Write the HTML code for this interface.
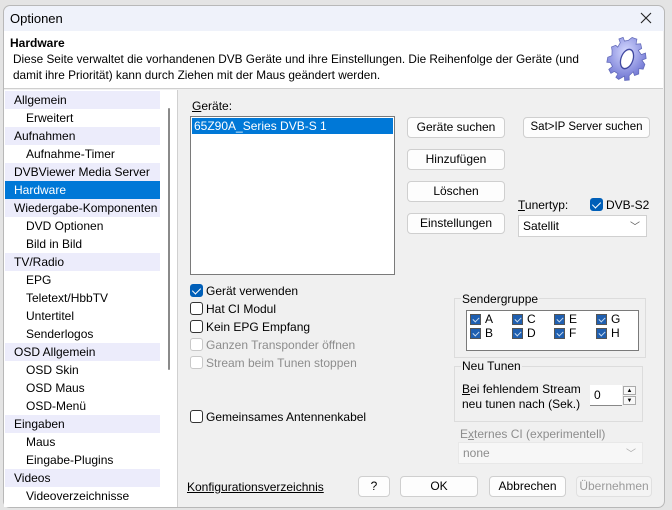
<!DOCTYPE html>
<html><head><meta charset="utf-8"><style>
*{box-sizing:border-box;margin:0;padding:0}
body{width:672px;height:510px;background:#e4e4e4;font-family:"Liberation Sans",sans-serif;font-size:12px;color:#000;position:relative;overflow:hidden}
.a{position:absolute}
.win{left:3px;top:5px;width:662px;height:503px;background:#f0f0f0;border:1px solid #b8b8b8;border-radius:7px;overflow:hidden}
.btn{position:absolute;height:21px;background:#fdfdfd;border:1px solid #cfcfcf;border-radius:4px;text-align:center;line-height:19px;font-size:12px;white-space:nowrap}
.tr{position:absolute;left:5px;width:155px;height:18px;line-height:18px;padding-left:9px;white-space:nowrap}
.cat{background:#ececfb}
.sub{padding-left:21px}
.cb{position:absolute;width:13px;height:13px;border:1px solid #333;border-radius:3px;background:#fff}
.cbc{background:#005fb8;border-color:#005fb8}
.cbc::after{content:"";position:absolute;left:3px;top:1px;width:4px;height:7px;border:solid #fff;border-width:0 1.5px 1.5px 0;transform:rotate(45deg)}
.dis{color:#8d8d8d}
.sq{position:absolute;width:11px;height:11px;background:#1f5fb0;border:1px solid #555}
.sq::after{content:"";position:absolute;left:3px;top:1px;width:3px;height:5px;border:solid #cde;border-width:0 1px 1px 0;transform:rotate(45deg)}
</style></head><body>
<div class="a win"></div>
<div class="a" style="left:4px;top:6px;width:660px;height:25px;background:#eff2fa;border-radius:7px 7px 0 0"></div>
<div class="a" style="left:10px;top:11px;font-size:13px">Optionen</div>
<svg class="a" style="left:640px;top:12px" width="12" height="12" viewBox="0 0 12 12"><path d="M1,1 L11,11 M11,1 L1,11" stroke="#222" stroke-width="1.1"/></svg>
<div class="a" style="left:4px;top:31px;width:659px;height:58px;background:#fff;border-bottom:1px solid #cfcfcf"></div>
<div class="a" style="left:10px;top:36px;font-weight:bold">Hardware</div>
<div class="a" style="left:13px;top:51px;line-height:16px;width:585px;font-size:11.8px">Diese Seite verwaltet die vorhandenen DVB Geräte und ihre Einstellungen. Die Reihenfolge der Geräte (und damit ihre Priorität) kann durch Ziehen mit der Maus geändert werden.</div>
<svg class="a" style="left:604px;top:36px" width="46" height="46" viewBox="0 0 46 46">
<defs><radialGradient id="g" cx="40%" cy="35%" r="70%"><stop offset="0" stop-color="#d4d8ff"/><stop offset="1" stop-color="#6a70d0"/></radialGradient></defs>
<g transform="translate(23,23) rotate(20) scale(0.85,1)">
<path fill="url(#g)" stroke="#6068b8" stroke-width="0.8" d="M-3,-22 L3,-22 L4,-17 L9,-19 L12,-15 L9,-12 L14,-9 L18,-12 L21,-7 L17,-4 L22,-1 L22,4 L17,5 L19,10 L15,13 L12,10 L9,15 L11,19 L6,21 L4,17 L-1,22 L-5,21 L-4,17 L-9,16 L-12,19 L-16,16 L-13,12 L-17,9 L-21,10 L-22,5 L-18,2 L-20,-3 L-22,-6 L-18,-9 L-15,-8 L-14,-13 L-17,-16 L-13,-19 L-10,-16 L-6,-18 Z"/>
<ellipse cx="0" cy="0" rx="7" ry="10" fill="#fff" stroke="#4048a0" stroke-width="1.5"/>
</g></svg>
<div class="a" style="left:4px;top:90px;width:174px;height:417px;background:#fff;border-right:1px solid #d0d0d0"></div>
<div class="a" style="left:168px;top:108px;width:2px;height:262px;background:#8a8a8a;border-radius:1px"></div>
<div class="tr cat" style="top:91px">Allgemein</div>
<div class="tr sub" style="top:109px">Erweitert</div>
<div class="tr cat" style="top:127px">Aufnahmen</div>
<div class="tr sub" style="top:145px">Aufnahme-Timer</div>
<div class="tr cat" style="top:163px">DVBViewer Media Server</div>
<div class="tr" style="top:181px;background:#0078d7;color:#fff">Hardware</div>
<div class="tr cat" style="top:199px">Wiedergabe-Komponenten</div>
<div class="tr sub" style="top:217px">DVD Optionen</div>
<div class="tr sub" style="top:235px">Bild in Bild</div>
<div class="tr cat" style="top:253px">TV/Radio</div>
<div class="tr sub" style="top:271px">EPG</div>
<div class="tr sub" style="top:289px">Teletext/HbbTV</div>
<div class="tr sub" style="top:307px">Untertitel</div>
<div class="tr sub" style="top:325px">Senderlogos</div>
<div class="tr cat" style="top:343px">OSD Allgemein</div>
<div class="tr sub" style="top:361px">OSD Skin</div>
<div class="tr sub" style="top:379px">OSD Maus</div>
<div class="tr sub" style="top:397px">OSD-Menü</div>
<div class="tr cat" style="top:415px">Eingaben</div>
<div class="tr sub" style="top:433px">Maus</div>
<div class="tr sub" style="top:451px">Eingabe-Plugins</div>
<div class="tr cat" style="top:469px">Videos</div>
<div class="tr sub" style="top:487px">Videoverzeichnisse</div>

<div class="a" style="left:192px;top:99px"><u>G</u>eräte:</div>
<div class="a" style="left:190px;top:116px;width:205px;height:159px;background:#fff;border:1px solid #7a7a7a"></div>
<div class="a" style="left:192px;top:118px;width:201px;height:16px;background:#0078d7;color:#fff;padding-left:2px;line-height:16px">65Z90A_Series DVB-S 1</div>
<div class="btn" style="left:407px;top:117px;width:98px">Geräte suchen</div>
<div class="btn" style="left:523px;top:117px;width:127px;font-size:11.5px">Sat&gt;IP Server suchen</div>
<div class="btn" style="left:407px;top:149px;width:98px">Hinzufügen</div>
<div class="btn" style="left:407px;top:181px;width:98px">Löschen</div>
<div class="btn" style="left:407px;top:213px;width:98px">Einstellungen</div>
<div class="a" style="left:518px;top:198px"><u>T</u>unertyp:</div>
<div class="cb cbc" style="left:590px;top:198px"></div>
<div class="a" style="left:606px;top:198px">DVB-S2</div>
<div class="a" style="left:518px;top:215px;width:129px;height:22px;background:#fff;border:1px solid #d0d0d0;padding:3px 4px">Satellit<span style="position:absolute;right:6px;top:2px;font-size:10px;color:#555">﹀</span></div>

<div class="cb cbc" style="left:190px;top:284px"></div><div class="a" style="left:206px;top:284px">Gerät verwenden</div>
<div class="cb" style="left:190px;top:302px"></div><div class="a" style="left:206px;top:302px">Hat CI Modul</div>
<div class="cb" style="left:190px;top:320px"></div><div class="a" style="left:206px;top:320px">Kein EPG Empfang</div>
<div class="cb" style="left:190px;top:338px;border-color:#c8c8c8"></div><div class="a dis" style="left:206px;top:338px">Ganzen Transponder öffnen</div>
<div class="cb" style="left:190px;top:356px;border-color:#c8c8c8"></div><div class="a dis" style="left:206px;top:356px">Stream beim Tunen stoppen</div>
<div class="cb" style="left:190px;top:410px"></div><div class="a" style="left:206px;top:410px">Gemeinsames Antennenkabel</div>

<div class="a" style="left:454px;top:298px;width:192px;height:60px;border:1px solid #dcdcdc"></div>
<div class="a" style="left:461px;top:292px;background:#f0f0f0;padding:0 1px">Sendergruppe</div>
<div class="a" style="left:466px;top:310px;width:173px;height:41px;background:#fff;border:1px solid #7a7a7a"></div>
<div class="sq" style="left:470px;top:314px"></div><div class="a" style="left:485px;top:312px">A</div>
<div class="sq" style="left:512px;top:314px"></div><div class="a" style="left:527px;top:312px">C</div>
<div class="sq" style="left:554px;top:314px"></div><div class="a" style="left:569px;top:312px">E</div>
<div class="sq" style="left:596px;top:314px"></div><div class="a" style="left:611px;top:312px">G</div>
<div class="sq" style="left:470px;top:328px"></div><div class="a" style="left:485px;top:326px">B</div>
<div class="sq" style="left:512px;top:328px"></div><div class="a" style="left:527px;top:326px">D</div>
<div class="sq" style="left:554px;top:328px"></div><div class="a" style="left:569px;top:326px">F</div>
<div class="sq" style="left:596px;top:328px"></div><div class="a" style="left:611px;top:326px">H</div>

<div class="a" style="left:454px;top:366px;width:189px;height:56px;border:1px solid #dcdcdc"></div>
<div class="a" style="left:461px;top:359px;background:#f0f0f0;padding:0 1px">Neu Tunen</div>
<div class="a" style="left:462px;top:382px;line-height:15px"><u>B</u>ei fehlendem Stream<br>neu tunen nach (Sek.)</div>
<div class="a" style="left:590px;top:385px;width:32px;height:21px;background:#fff;border-bottom:1px solid #888;padding:3px 4px">0</div>
<div class="a" style="left:623px;top:386px;width:13px;height:9px;border:1px solid #aaa;background:#f8f8f8;font-size:6px;text-align:center;line-height:8px">▲</div>
<div class="a" style="left:623px;top:396px;width:13px;height:9px;border:1px solid #aaa;background:#f8f8f8;font-size:6px;text-align:center;line-height:8px">▼</div>

<div class="a dis" style="left:460px;top:427px">E<u>x</u>ternes CI (experimentell)</div>
<div class="a" style="left:458px;top:442px;width:185px;height:22px;background:#f7f7f7;border:1px solid #e8e8e8;padding:3px 4px;color:#8d8d8d">none<span style="position:absolute;right:6px;top:2px;font-size:10px;color:#aaa">﹀</span></div>

<div class="a" style="left:187px;top:480px"><u>Konfigurationsverzeichnis</u></div>
<div class="btn" style="left:358px;top:476px;width:32px">?</div>
<div class="btn" style="left:400px;top:476px;width:78px">OK</div>
<div class="btn" style="left:489px;top:476px;width:77px">Abbrechen</div>
<div class="btn" style="left:576px;top:476px;width:76px;color:#9a9a9a;background:#f4f4f4;border-color:#e0e0e0">Übernehmen</div>
</body></html>
